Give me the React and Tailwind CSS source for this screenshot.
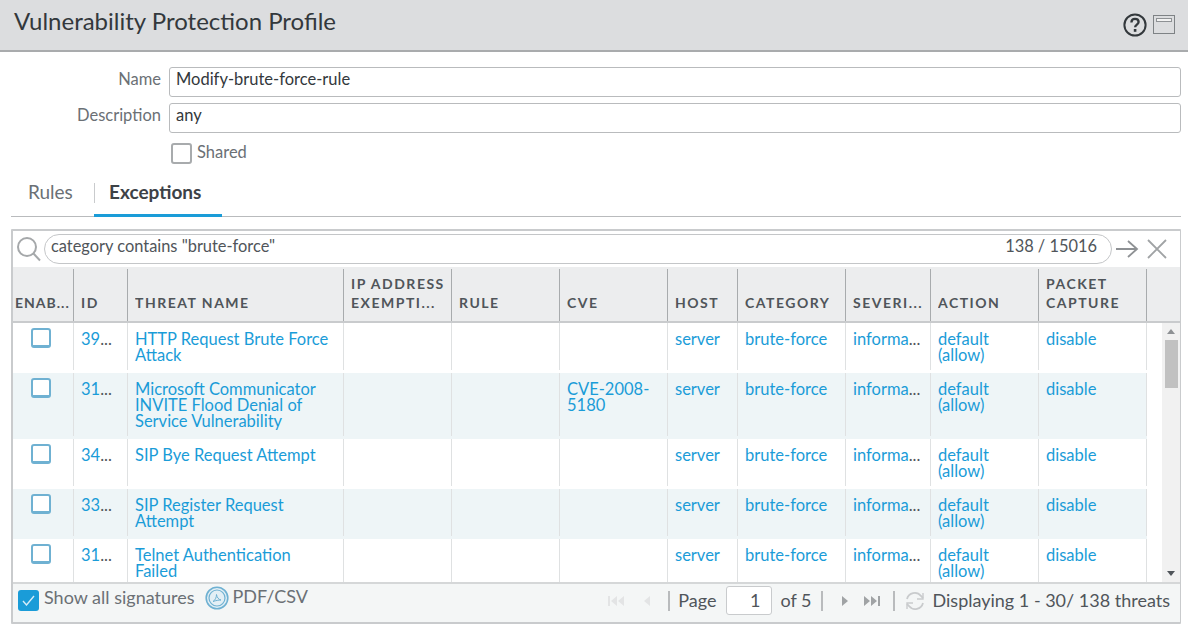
import React from 'react';

const GRID = 'grid grid-cols-[61px_54px_216px_108px_108px_108px_70px_108px_85px_108px_108px]';

const rows = [
  { id: '39...', name: ['HTTP Request Brute Force', 'Attack'], h: 'h-[50px]' },
  { id: '31...', name: ['Microsoft Communicator', 'INVITE Flood Denial of', 'Service Vulnerability'], cve: ['CVE-2008-', '5180'], h: 'h-[66px]', alt: true },
  { id: '34...', name: ['SIP Bye Request Attempt'], h: 'h-[50px]' },
  { id: '33...', name: ['SIP Register Request', 'Attempt'], h: 'h-[50px]', alt: true },
  { id: '31...', name: ['Telnet Authentication', 'Failed'], h: 'h-[50px]' },
];

function HeadCell({ children, last }) {
  return (
    <div className={`flex items-end h-[52px] my-[2px] pb-[9px] pl-[7px] pr-1 text-[14px] leading-[19px] font-bold tracking-[1.5px] text-[#50555a] ${last ? '' : 'border-r border-[#a8abad]'}`}>
      <div className="overflow-hidden">{children}</div>
    </div>
  );
}

function Cell({ children, cls = '' }) {
  return (
    <div className={`border-r border-[#dfe1e2] mb-[3px] pl-[7px] pt-2 text-[16.5px] leading-[16px] text-[#1a9cd8] whitespace-nowrap overflow-hidden ${cls}`}>
      {children}
    </div>
  );
}

function Row({ row }) {
  return (
    <div className={`${GRID} ${row.h} ${row.alt ? 'bg-[#eef5f7]' : 'bg-white'}`}>
      <div className="border-r border-[#dfe1e2] mb-[3px] flex justify-center pt-[5px] pr-[5px]">
        <div className="w-[20px] h-[20px] rounded-[3px] border-2 border-b-[3px] border-[#6fb1d2] bg-white" />
      </div>
      <Cell>{row.id.replace('...', '')}<span className="text-[#50555a]">...</span></Cell>
      <Cell>{row.name.map((l) => <div key={l}>{l}</div>)}</Cell>
      <Cell />
      <Cell />
      <Cell>{row.cve && row.cve.map((l) => <div key={l}>{l}</div>)}</Cell>
      <Cell>server</Cell>
      <Cell>brute-force</Cell>
      <Cell>informa<span className="text-[#50555a]">...</span></Cell>
      <Cell><div>default</div><div>(allow)</div></Cell>
      <Cell>disable</Cell>
    </div>
  );
}

export default function App() {
  return (
    <div className="w-[1188px] h-[629px] overflow-hidden bg-white font-['Lato',sans-serif] text-[#50555a]">
      <div className="h-[52px] bg-[#dcdddf] border-b-2 border-[#a9abad] flex items-center justify-between pl-[14px] pr-[13px] pb-[7px]">
        <div className="text-[24px] leading-[30px] text-[#33383c] -mt-[2px]">Vulnerability Protection Profile</div>
        <div className="flex items-center gap-[6px] pt-[6px]">
          <svg width="24" height="24" viewBox="0 0 24 24" fill="none" className="ml-[1px]">
            <circle cx="12" cy="12" r="10.600" stroke="#33383c" strokeWidth="2" />
            <path d="M8.400 9.400c0-2.200 1.600-3.600 3.600-3.600s3.600 1.200 3.600 3.100c0 2.700-3.500 2.600-3.500 5.400" stroke="#33383c" strokeWidth="2.300" />
            <rect x="10.800" y="16" width="2.600" height="2.800" fill="#33383c" />
          </svg>
          <svg width="22" height="19" viewBox="0 0 22 19" fill="none">
            <rect x="0.500" y="0.500" width="21" height="18" stroke="#7e8285" fill="#dcdddf" />
            <rect x="3.500" y="3.500" width="15" height="3" stroke="#8e9194" fill="#f2f2f2" />
          </svg>
        </div>
      </div>

      <div className="pl-[11px] pr-[7px]">
        <div className="flex flex-col gap-[6px] pt-[15px]">
          <div className="flex items-center">
            <div className="w-[150px] text-right text-[16.500px] text-[#6b7075] -mt-[6px]">Name</div>
            <div className="ml-2 flex-1 h-[30px] rounded-[3px] border border-[#b9bbbd] pl-[6px] text-[16.500px] leading-[22px] text-[#33383c]">Modify-brute-force-rule</div>
          </div>
          <div className="flex items-center">
            <div className="w-[150px] text-right text-[16.500px] text-[#6b7075] -mt-[6px]">Description</div>
            <div className="ml-2 flex-1 h-[30px] rounded-[3px] border border-[#b9bbbd] pl-[6px] text-[16.500px] leading-[22px] text-[#33383c]">any</div>
          </div>
        </div>
        <div className="flex items-center pl-[160px] pt-[11px] h-[31px]">
          <div className="w-[21px] h-[21px] rounded-[3px] border-2 border-[#a8abad] bg-white -mt-[2px]" />
          <div className="ml-[5px] text-[16.500px] text-[#6b7075] -mt-[4px]">Shared</div>
        </div>

        <div className="flex items-center h-[43px] mt-[10px] border-b border-[#b9bbbd]">
          <div className="pl-[17px] w-[83px] text-[19px] text-[#6b7075] pb-[5px]">Rules</div>
          <div className="w-px h-[20px] bg-[#c9cbcd] mb-[4px]" />
          <div className="ml-[-1px] h-[43px] w-[128px] border-b-[3px] border-[#1a9cd8] pl-[15px] text-[19px] leading-[36px] font-bold text-[#3d4247]">Exceptions</div>
        </div>

        <div className="mt-[12px] h-[395px] border-2 border-[#c9cbcd] border-r-[1px] flex flex-col rounded-[1px]">
          <div className="h-[36px] flex items-center pl-[3px] pr-[10px] shrink-0">
            <svg width="26" height="26" viewBox="0 0 26 26" fill="none" className="shrink-0">
              <circle cx="11" cy="11" r="9" stroke="#a5a8aa" strokeWidth="2" />
              <path d="M17.500 17.500 24 24.500" stroke="#a5a8aa" strokeWidth="2" />
            </svg>
            <div className="ml-[2px] h-[30px] w-[1068px] rounded-full border border-[#c4c6c8] flex items-center justify-between pl-[6px] pr-[14px] text-[16.400px] text-[#50555a]">
              <span className="-mt-[5px]">category contains "brute-force"</span>
              <span className="-mt-[5px]">138 / 15016</span>
            </div>
            <svg width="24" height="20" viewBox="0 0 24 20" fill="none" className="ml-[3px] shrink-0">
              <path d="M1 10h21M13 2l9 8-9 8" stroke="#8e9194" strokeWidth="1.800" />
            </svg>
            <svg width="20" height="20" viewBox="0 0 20 20" fill="none" className="ml-[8px] shrink-0">
              <path d="M1 1l18 18M19 1 1 19" stroke="#a0a3a5" strokeWidth="1.800" />
            </svg>
          </div>

          <div className="flex h-[56px] shrink-0 bg-[#ecedee] border-b-2 border-[#c9cbcd]">
            <div className={GRID}>
              <div className="flex items-end h-[52px] my-[2px] pb-[9px] pl-[2px] text-[14px] leading-[19px] font-bold tracking-[1px] text-[#50555a] border-r border-[#a8abad]">ENAB...</div>
              <HeadCell>ID</HeadCell>
              <HeadCell>THREAT NAME</HeadCell>
              <HeadCell><div>IP ADDRESS</div><div>EXEMPTI...</div></HeadCell>
              <HeadCell>RULE</HeadCell>
              <HeadCell>CVE</HeadCell>
              <HeadCell>HOST</HeadCell>
              <HeadCell>CATEGORY</HeadCell>
              <HeadCell>SEVERI...</HeadCell>
              <HeadCell>ACTION</HeadCell>
              <HeadCell><div>PACKET</div><div>CAPTURE</div></HeadCell>
            </div>
          </div>

          <div className="flex h-[259px] shrink-0 overflow-hidden">
            <div className="w-[1134px] shrink-0">
              {rows.map((r, i) => <Row key={i} row={r} />)}
            </div>
            <div className="flex-1 flex flex-col items-center bg-[#f1f1f1] ml-[15px]">
              <div className="mt-[6px] w-0 h-0 border-l-[4px] border-r-[4px] border-b-[5px] border-l-transparent border-r-transparent border-b-[#8e9194]" />
              <div className="mt-[6px] w-[13px] h-[48px] bg-[#c1c1c1]" />
              <div className="mt-auto mb-[6px] w-0 h-0 border-l-[4px] border-r-[4px] border-t-[5px] border-l-transparent border-r-transparent border-t-[#50555a]" />
            </div>
          </div>

          <div className="flex-1 bg-[#f4f6f6] border-t-2 border-[#d5d7d8] flex items-start justify-between pr-[10px]">
            <div className="flex items-center pl-[5px] pt-[5px]">
              <div className="w-[21px] h-[21px] rounded-[3px] bg-[#1a9cd8] flex items-center justify-center">
                <svg width="13" height="11" viewBox="0 0 13 11" fill="none"><path d="M1 6l3.500 4L12 1" stroke="#d5ecf8" strokeWidth="1.400" /></svg>
              </div>
              <div className="ml-[5px] text-[18px] text-[#6b7075] -mt-[5px]">Show all signatures</div>
              <svg width="24" height="24" viewBox="0 0 24 24" fill="none" className="ml-[11px] -mt-[4px]">
                <circle cx="12" cy="12" r="10.800" stroke="#6fb1d2" strokeWidth="1.600" fill="#e3eff5" />
                <circle cx="12" cy="12" r="8" stroke="#6fb1d2" strokeWidth="1.200" />
                <path d="M8 15.500c2-1 3.500-4 3.500-7 .5 3 2 5 4.500 5.500-2.500 0-5 .5-8 1.500z" stroke="#6fb1d2" strokeWidth="1" />
              </svg>
              <div className="ml-[3px] text-[18px] text-[#6b7075] -mt-[7px]">PDF/CSV</div>
            </div>
            <div className="flex items-center pt-[2px] text-[18px] text-[#50555a]">
              <svg width="18" height="12" viewBox="0 0 18 12" fill="#e3e4e5"><rect x="0" y="1" width="2" height="10" /><path d="M9 1v10L3 6zM16 1v10l-6-5z" /></svg>
              <svg width="8" height="12" viewBox="0 0 8 12" fill="#e3e4e5" className="ml-[17px]"><path d="M7 1v10L1 6z" /></svg>
              <div className="ml-[17px] w-[2px] h-[20px] bg-[#b9bbbd]" />
              <div className="ml-[8px]">Page</div>
              <div className="ml-[10px] w-[46px] h-[29px] rounded-[3px] border border-[#c9cbcd] bg-white text-right pr-[11px] leading-[26px]">1</div>
              <div className="ml-[8px]">of 5</div>
              <div className="ml-[9px] w-[2px] h-[20px] bg-[#b9bbbd]" />
              <svg width="8" height="12" viewBox="0 0 8 12" fill="#a0a3a5" className="ml-[18px]"><path d="M1 1v10l6-5z" /></svg>
              <svg width="18" height="12" viewBox="0 0 18 12" fill="#a0a3a5" className="ml-[14px]"><path d="M1 1v10l6-5zM8 1v10l6-5z" /><rect x="15" y="1" width="2" height="10" /></svg>
              <div className="ml-[12px] w-[2px] h-[20px] bg-[#b9bbbd]" />
              <svg width="20" height="20" viewBox="0 0 20 20" fill="none" className="ml-[10px]">
                <path d="M2 8a8 8 0 0 1 14-3l2 2M18 12a8 8 0 0 1-14 3l-2-2" stroke="#c9cbcd" strokeWidth="1.800" />
                <path d="M18 2v6h-6M2 18v-6h6" stroke="#c9cbcd" strokeWidth="1.400" />
              </svg>
              <div className="ml-[8px]">Displaying 1 - 30/ 138 threats</div>
            </div>
          </div>
        </div>
      </div>
    </div>
  );
}
